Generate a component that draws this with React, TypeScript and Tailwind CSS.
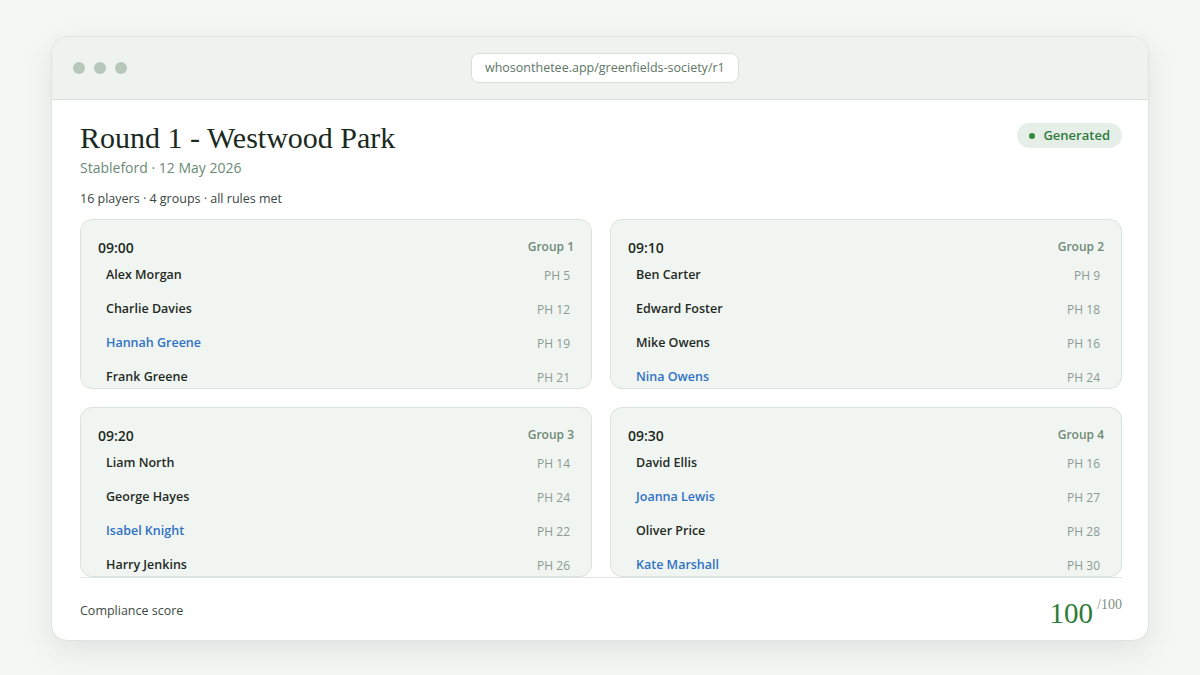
import React from 'react';

interface Player {
  name: string;
  ph: number;
  guest?: boolean;
}

interface Group {
  time: string;
  label: string;
  players: Player[];
}

const groups: Group[] = [
  {
    time: '09:00',
    label: 'Group 1',
    players: [
      { name: 'Alex Morgan', ph: 5 },
      { name: 'Charlie Davies', ph: 12 },
      { name: 'Hannah Greene', ph: 19, guest: true },
      { name: 'Frank Greene', ph: 21 },
    ],
  },
  {
    time: '09:10',
    label: 'Group 2',
    players: [
      { name: 'Ben Carter', ph: 9 },
      { name: 'Edward Foster', ph: 18 },
      { name: 'Mike Owens', ph: 16 },
      { name: 'Nina Owens', ph: 24, guest: true },
    ],
  },
  {
    time: '09:20',
    label: 'Group 3',
    players: [
      { name: 'Liam North', ph: 14 },
      { name: 'George Hayes', ph: 24 },
      { name: 'Isabel Knight', ph: 22, guest: true },
      { name: 'Harry Jenkins', ph: 26 },
    ],
  },
  {
    time: '09:30',
    label: 'Group 4',
    players: [
      { name: 'David Ellis', ph: 16 },
      { name: 'Joanna Lewis', ph: 27, guest: true },
      { name: 'Oliver Price', ph: 28 },
      { name: 'Kate Marshall', ph: 30, guest: true },
    ],
  },
];

const serif = "font-['Georgia','Liberation_Serif',serif]";

function GroupCard({ group }: { group: Group }) {
  return (
    <div className="h-[170px] overflow-hidden rounded-xl border border-[#d9e3dc] bg-[#f1f5f2] pl-[17px] pr-[17px] pt-[17px]">
      <div className="flex h-5 items-center justify-between">
        <span className="text-[14px] font-semibold text-[#1d2a22]">{group.time}</span>
        <span className="text-[12px] font-semibold text-[#6f8a78]">{group.label}</span>
      </div>
      {group.players.map((p) => (
        <div key={p.name} className="flex h-[34px] items-center justify-between pl-2 pr-1 pt-[3px]">
          <span
            className={`text-[12.5px] font-semibold ${p.guest ? 'text-[#2f72c4]' : 'text-[#1f2a24]'}`}
          >
            {p.name}
          </span>
          <span className="text-[12px] text-[#8a9a90]">PH {p.ph}</span>
        </div>
      ))}
    </div>
  );
}

export default function App() {
  return (
    <div className="min-h-screen bg-[#f5f7f5] px-[51px] pt-9 font-['Open_Sans','Noto_Sans',sans-serif]">
      <div className="overflow-hidden rounded-2xl border border-[#dde5df] bg-white shadow-[0_10px_30px_rgba(40,60,45,0.10)]">
        {/* Browser bar */}
        <div className="relative flex h-[63px] items-center border-b border-[#d7e0da] bg-[#eef3ef] px-[21px]">
          <div className="flex gap-[9px]">
            <span className="h-3 w-3 rounded-full bg-[#b7c7bb]" />
            <span className="h-3 w-3 rounded-full bg-[#b7c7bb]" />
            <span className="h-3 w-3 rounded-full bg-[#b7c7bb]" />
          </div>
          <div className="absolute left-[419px] top-[16px] flex h-[30px] items-center rounded-lg border border-[#d6dfd9] bg-white px-[13px] text-[12.5px] text-[#5e7566]">
            whosonthetee.app/greenfields-society/r1
          </div>
        </div>

        {/* Content */}
        <div className="pl-[28px] pr-[26px] pt-[20px]">
          <div className="flex items-start justify-between">
            <div>
              <h1 className={`${serif} text-[30px] leading-9 text-[#1a2a20]`}>Round 1 - Westwood Park</h1>
              <p className="mt-0.5 text-[14px] leading-5 text-[#6b8a77]">Stableford · 12 May 2026</p>
            </div>
            <div className="mt-[3px] flex h-[25px] items-center gap-2 rounded-full bg-[#e5efe7] px-3 text-[13px] font-semibold text-[#2f7a3e]">
              <span className="h-1.5 w-1.5 rounded-full bg-[#2f8a3e]" />
              Generated
            </div>
          </div>
          <p className="mt-[12px] text-[12.5px] leading-[18px] text-[#3a463f]">16 players · 4 groups · all rules met</p>

          <div className="mt-[11px] grid grid-cols-2 gap-[18px]">
            {groups.map((g) => (
              <GroupCard key={g.label} group={g} />
            ))}
          </div>

          {/* Footer */}
          <div className="flex h-[63px] items-center justify-between border-t border-[#dfe6e1] pt-1">
            <span className="text-[12.5px] text-[#3d4a42]">Compliance score</span>
            <div className="flex items-start">
              <span className={`${serif} mt-1 text-[29px] leading-8 text-[#2e7a38]`}>100</span>
              <span className={`${serif} ml-1 mt-1 text-[14px] leading-4 text-[#7f8f85]`}>/100</span>
            </div>
          </div>
        </div>
      </div>
    </div>
  );
}
